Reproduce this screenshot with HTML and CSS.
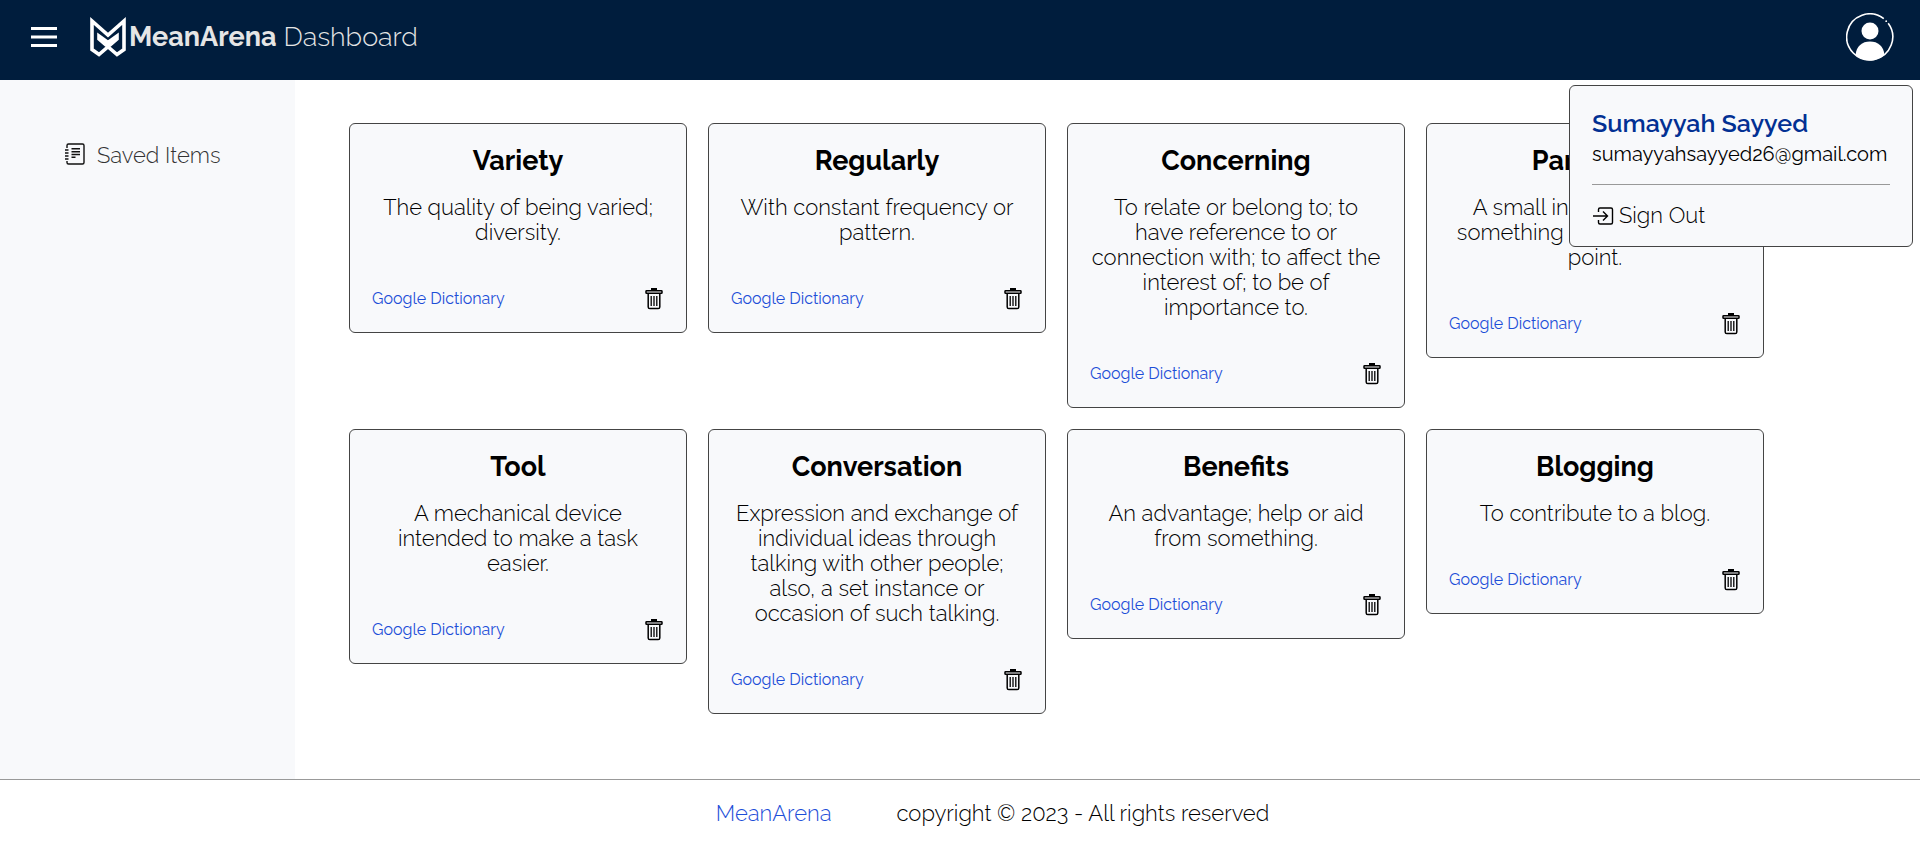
FILE: index.html
```html
<!DOCTYPE html>
<html lang="en">
<head>
<meta charset="utf-8">
<title>MeanArena Dashboard</title>
<meta name="viewport" content="width=device-width, initial-scale=1">
<link rel="stylesheet" href="styles.css">
</head>
<body>
<svg class="sprite" aria-hidden="true">
  <symbol id="trash" viewBox="0 0 18 22">
    <path d="M6 1.2h6" stroke="currentColor" stroke-width="2.4"/>
    <rect x="1" y="2.7" width="16" height="2.6" rx=".6" fill="none" stroke="currentColor" stroke-width="1.5"/>
    <path d="M3.2 5.5V19a1.6 1.6 0 0 0 1.6 1.6h8.4a1.6 1.6 0 0 0 1.6-1.6V5.5" fill="none" stroke="currentColor" stroke-width="1.5"/>
    <path d="M6.2 8v10M9 8v10M11.8 8v10" stroke="currentColor" stroke-width="1.3"/>
  </symbol>
</svg>

<header class="topbar">
  <button class="icon-button menu-button" type="button" aria-label="Menu">
    <svg width="26" height="22" viewBox="0 0 26 22"><path d="M0 2.500h26M0 11h26M0 19.500h26" stroke="#fff" stroke-width="3"/></svg>
  </button>
  <div class="brand">
    <svg width="36" height="40" viewBox="0 0 36 40"><path d="M2 4v28.500l7 5 18-15.500v-3l-9 6.500-9-6.500v3l18 15.500 7-5V4L18 18z" fill="none" stroke="#fff" stroke-width="3.600"/></svg>
    <h1 class="brand-name"><strong>MeanArena</strong> Dashboard</h1>
  </div>
  <div class="account">
    <button class="icon-button" type="button" aria-label="Account" aria-expanded="true">
      <svg width="48" height="48" viewBox="0 0 48 48">
        <path d="M37.800 5.700A23 23 0 1 0 42.200 10.200" fill="none" stroke="#fff" stroke-width="1.600"/>
        <circle cx="40.200" cy="8.200" r=".9" fill="#fff"/>
        <circle cx="24" cy="18" r="8.500" fill="#fff"/>
        <path d="M9.500 42C10.500 33 16 28.500 24 28.500S37.500 33 38.500 42C34 46 29 47.500 24 47.500S14 46 9.500 42z" fill="#fff"/>
      </svg>
    </button>
    <div class="account-menu">
      <p class="account-name">Sumayyah Sayyed</p>
      <p class="account-mail">sumayyahsayyed26@gmail.com</p>
      <hr class="account-rule">
      <button class="sign-out" type="button">
        <svg width="22" height="18" viewBox="0 0 22 18" fill="none" stroke="currentColor" stroke-width="1.400"><path d="M6.500 5V2.500A1.500 1.500 0 0 1 8 1h11a1.500 1.500 0 0 1 1.500 1.500v13A1.500 1.500 0 0 1 19 17H8a1.500 1.500 0 0 1-1.500-1.500V13M1 9h14M11 4.500L15.500 9 11 13.500"/></svg>
        Sign Out
      </button>
    </div>
  </div>
</header>

<div class="layout">
  <nav class="sidebar">
    <a class="side-link" href="#saved">
      <svg width="20" height="22" viewBox="0 0 20 22" fill="none" stroke="#111"><path d="M2 5V2.500A1.500 1.500 0 0 1 3.500 1h14A1.500 1.500 0 0 1 19 2.500v17a1.500 1.500 0 0 1-1.500 1.500h-14A1.500 1.500 0 0 1 2 19.500V18" stroke-width="1.400"/><path d="M0 7h3.500M0 10h3.500M0 13h3.500M0 16h3.500" stroke-width="1.600"/><path d="M6.500 5.800H15M6.500 8.800H15M6.500 11.500H15M6.500 14.200h4" stroke-width="1.500"/></svg>
      Saved Items
    </a>
  </nav>
  <main class="cards" id="saved">
    <article class="card">
      <h2 class="card-title">Variety</h2>
      <p class="card-text">The quality of being varied; diversity.</p>
      <div class="card-foot"><a class="card-link" href="#">Google Dictionary</a><button class="icon-button" type="button" aria-label="Delete Variety"><svg width="18" height="22"><use href="#trash"/></svg></button></div>
    </article>
    <article class="card">
      <h2 class="card-title">Regularly</h2>
      <p class="card-text">With constant frequency or pattern.</p>
      <div class="card-foot"><a class="card-link" href="#">Google Dictionary</a><button class="icon-button" type="button" aria-label="Delete Regularly"><svg width="18" height="22"><use href="#trash"/></svg></button></div>
    </article>
    <article class="card">
      <h2 class="card-title">Concerning</h2>
      <p class="card-text">To relate or belong to; to<br>have reference to or<br>connection with; to affect the<br>interest of; to be of<br>importance to.</p>
      <div class="card-foot"><a class="card-link" href="#">Google Dictionary</a><button class="icon-button" type="button" aria-label="Delete Concerning"><svg width="18" height="22"><use href="#trash"/></svg></button></div>
    </article>
    <article class="card">
      <h2 class="card-title">Particular</h2>
      <p class="card-text">A small individual part of<br>something larger; a detail, a<br>point.</p>
      <div class="card-foot"><a class="card-link" href="#">Google Dictionary</a><button class="icon-button" type="button" aria-label="Delete Particular"><svg width="18" height="22"><use href="#trash"/></svg></button></div>
    </article>
    <article class="card">
      <h2 class="card-title">Tool</h2>
      <p class="card-text">A mechanical device<br>intended to make a task<br>easier.</p>
      <div class="card-foot"><a class="card-link" href="#">Google Dictionary</a><button class="icon-button" type="button" aria-label="Delete Tool"><svg width="18" height="22"><use href="#trash"/></svg></button></div>
    </article>
    <article class="card">
      <h2 class="card-title">Conversation</h2>
      <p class="card-text">Expression and exchange of<br>individual ideas through<br>talking with other people;<br>also, a set instance or<br>occasion of such talking.</p>
      <div class="card-foot"><a class="card-link" href="#">Google Dictionary</a><button class="icon-button" type="button" aria-label="Delete Conversation"><svg width="18" height="22"><use href="#trash"/></svg></button></div>
    </article>
    <article class="card">
      <h2 class="card-title">Benefits</h2>
      <p class="card-text">An advantage; help or aid<br>from something.</p>
      <div class="card-foot"><a class="card-link" href="#">Google Dictionary</a><button class="icon-button" type="button" aria-label="Delete Benefits"><svg width="18" height="22"><use href="#trash"/></svg></button></div>
    </article>
    <article class="card">
      <h2 class="card-title">Blogging</h2>
      <p class="card-text">To contribute to a blog.</p>
      <div class="card-foot"><a class="card-link" href="#">Google Dictionary</a><button class="icon-button" type="button" aria-label="Delete Blogging"><svg width="18" height="22"><use href="#trash"/></svg></button></div>
    </article>
  </main>
</div>

<footer class="footer">
  <a class="footer-link" href="#">MeanArena</a>
  <span>copyright © 2023 - All rights reserved</span>
</footer>
</body>
</html>
```

FILE: styles.css
```css
* {
  box-sizing: border-box;
}

body {
  margin: 0;
  background: #fff;
  color: #000;
  font-family: Raleway, Lato, sans-serif;
  font-size: 22px;
  font-weight: 300;
  line-height: 25px;
}

h1, h2, p {
  margin: 0;
}

a {
  color: #1d4ed8;
  text-decoration: none;
}

svg {
  display: block;
  flex: none;
}

.sprite {
  position: absolute;
  width: 0;
  height: 0;
}

.icon-button {
  padding: 0;
  border: 0;
  background: none;
  color: #000;
  cursor: pointer;
}

.topbar {
  display: flex;
  align-items: center;
  height: 80px;
  padding: 0 26px 6px 31px;
  background: #001d3d;
}

.brand {
  display: flex;
  align-items: center;
  margin-left: 33px;
  gap: 3px;
}

.brand-name {
  color: #e5e5e5;
  font-size: 27px;
  font-weight: 300;
  line-height: 32px;
}

.brand-name strong {
  font-weight: 700;
}

.account {
  display: flex;
  position: relative;
  margin-left: auto;
}

.account-menu {
  position: absolute;
  top: 72px;
  right: -19px;
  z-index: 1;
  min-width: 344px;
  padding: 21px 22px 18px;
  border: 1px solid #444;
  border-radius: 6px;
  background: #f8f9fb;
}

.account-name {
  color: #023093;
  font-size: 25px;
  font-weight: 600;
  line-height: 32px;
}

.account-mail {
  font-size: 20px;
  font-weight: 400;
  line-height: 30px;
}

.account-rule {
  margin: 15px 0 18px;
  border: 0;
  border-top: 1px solid #999;
}

.sign-out {
  display: flex;
  align-items: center;
  gap: 5px;
  padding: 0;
  border: 0;
  background: none;
  color: #000;
  font: inherit;
}

.layout {
  display: flex;
}

.sidebar {
  flex: none;
  width: 295px;
  padding: 63px 65px;
  background: #f8f9fb;
}

.side-link {
  display: flex;
  align-items: flex-start;
  gap: 12px;
  color: #333;
}

.cards {
  flex: 1;
  display: grid;
  grid-template-columns: repeat(4, 1fr);
  align-items: start;
  gap: 21px;
  padding: 43px 156px 65px 54px;
}

.card {
  padding: 21px;
  border: 1px solid #444;
  border-radius: 6px;
  background: #f8f9fb;
  text-align: center;
}

.card-title {
  font-size: 27px;
  font-weight: 700;
  line-height: 32px;
}

.card-text {
  margin-top: 18px;
}

.card-foot {
  display: flex;
  align-items: center;
  justify-content: space-between;
  margin-top: 42px;
  padding: 0 2px 0 1px;
}

.card-link {
  font-size: 16px;
  font-weight: 400;
  line-height: 24px;
}

.footer {
  display: flex;
  justify-content: center;
  gap: 65px;
  padding: 21px 0 39px 65px;
  border-top: 1px solid #999;
}
```
